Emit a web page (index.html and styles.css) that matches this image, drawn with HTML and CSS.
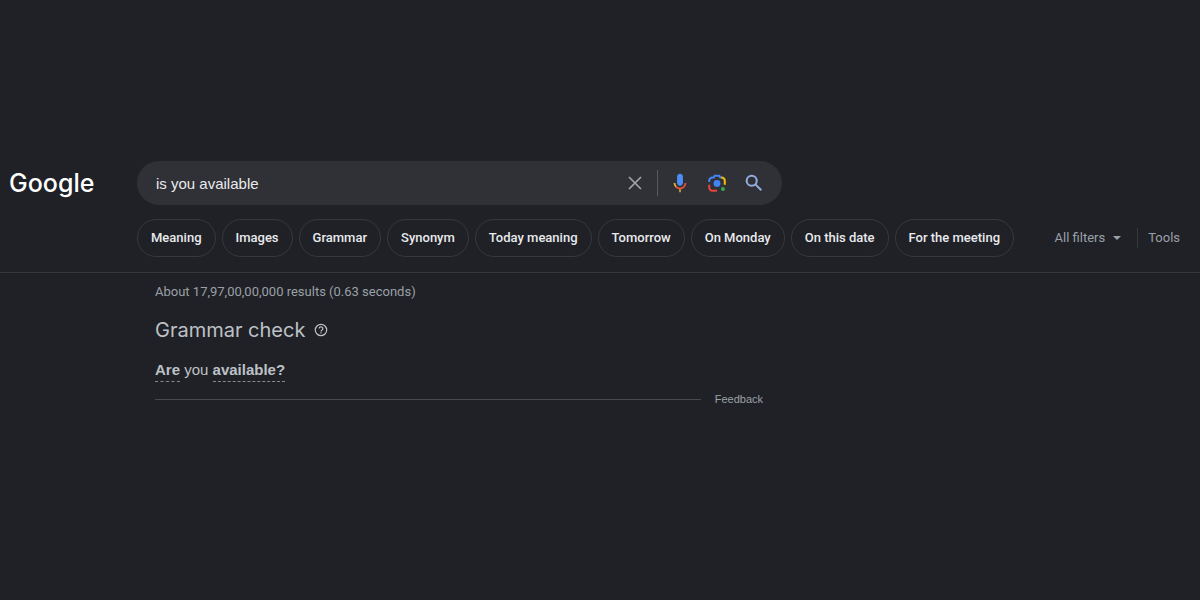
FILE: index.html
```html
<!DOCTYPE html>
<html lang="en">

<head>
    <meta charset="UTF-8">
    <meta name="viewport" content="width=device-width, initial-scale=1.0">
    <title>is you available - Google Search</title>
    <link rel="stylesheet" href="styles.css">
</head>

<body>

    <!-- Header Section -->
    <header class="header">
        <div class="search-row">
            <a href="#" class="logo">Google</a>
            <form class="search-box" role="search">
                <input type="text" class="search-input" value="is you available" aria-label="Search">
                <button type="reset" class="icon-button" aria-label="Clear">
                    <svg width="20" height="20" viewBox="0 0 20 20" fill="none" stroke="#a3a6aa" stroke-width="1.6">
                        <path d="M4 4l12 12M16 4L4 16" />
                    </svg>
                </button>
                <span class="divider"></span>
                <button type="button" class="icon-button" aria-label="Search by voice">
                    <svg width="22" height="22" viewBox="0 0 24 24">
                        <path fill="#4c8df6" d="M12 15c1.7 0 3.2-1.4 3.2-3.2V5.2C15.2 3.400 13.700 2 12 2S8.800 3.400 8.800 5.200v6.600C8.800 13.600 10.300 15 12 15z" />
                        <path fill="#b9a03c" d="M11 18.500h2V22h-2z" />
                        <path fill="#e0503f" d="M12 17a5 5 0 0 1-3.600-1.500l-1.400 1.400A7 7 0 0 0 12 19a7 7 0 0 0 7-7h-2a5 5 0 0 1-5 5z" />
                        <path fill="#f2b32c" d="M7.100 16.900A7 7 0 0 1 5 12h2c0 1.400.500 2.600 1.500 3.500z" />
                    </svg>
                </button>
                <button type="button" class="icon-button" aria-label="Search by image">
                    <svg width="22" height="22" viewBox="0 0 24 24" fill="none" stroke-width="2.2">
                        <path stroke="#4285f4" d="M3.500 11V9.500a3.500 3.500 0 0 1 3.500-3.500h1.500l1-2h5l1 2H17" />
                        <path stroke="#fbbc04" d="M16.500 6H17a3.500 3.500 0 0 1 3.500 3.500V14" />
                        <path stroke="#ea4335" d="M3.500 14v3A3.500 3.500 0 0 0 7 20.500h5" />
                        <circle cx="12" cy="12.500" r="3.700" fill="#4285f4" />
                        <circle cx="18.500" cy="18.500" r="2.200" fill="#34a853" />
                    </svg>
                </button>
                <button type="submit" class="icon-button" aria-label="Google Search">
                    <svg width="22" height="22" viewBox="0 0 24 24" fill="none" stroke="#93addf" stroke-width="2.2">
                        <circle cx="9.500" cy="9.500" r="5.500" />
                        <path d="M13.500 13.500l6.500 6.500" />
                    </svg>
                </button>
            </form>
        </div>

        <!-- Filters -->
        <nav class="filters">
            <a href="#" class="chip">Meaning</a>
            <a href="#" class="chip">Images</a>
            <a href="#" class="chip">Grammar</a>
            <a href="#" class="chip">Synonym</a>
            <a href="#" class="chip">Today meaning</a>
            <a href="#" class="chip">Tomorrow</a>
            <a href="#" class="chip">On Monday</a>
            <a href="#" class="chip">On this date</a>
            <a href="#" class="chip">For the meeting</a>
            <div class="tools">
                <button type="button" class="tool-button">All filters <span class="caret"></span></button>
                <button type="button" class="tool-button tool-last">Tools</button>
            </div>
        </nav>
    </header>

    <!-- Results Section -->
    <main class="results">
        <p class="stats">About 17,97,00,00,000 results (0.63 seconds)</p>
        <div class="title-row">
            <h1>Grammar check</h1>
            <button type="button" class="icon-button" aria-label="About grammar check">
                <svg width="14" height="14" viewBox="0 0 14 14" fill="none" stroke="#bdc1c6" stroke-width="1.2">
                    <circle cx="7" cy="7" r="5.700" />
                    <path d="M5.200 5.600a1.800 1.800 0 1 1 2.800 1.500c-.700.500-1 .700-1 1.300M7 9.300v1.300" />
                </svg>
            </button>
        </div>
        <p class="correction"><b>Are</b> you <b>available?</b></p>
        <div class="feedback">
            <a href="#">Feedback</a>
        </div>
    </main>

</body>

</html>
```
FILE: styles.css
```css
/* General Reset */
* {
    box-sizing: border-box;
}

body {
    margin: 0;
    font-family: "Liberation Sans", Arial, sans-serif;
    background: #202126;
    color: #bdc1c6;
}

a {
    color: inherit;
    text-decoration: none;
}

button {
    padding: 0;
    border: none;
    background: none;
    color: inherit;
    font: inherit;
    cursor: pointer;
}

/* Header Section */
.header {
    padding: 161px 20px 15px 9px;
    border-bottom: 1px solid #35363b;
}

.search-row {
    display: flex;
    align-items: center;
}

.logo {
    width: 128px;
    color: #fff;
    font-family: Inter, sans-serif;
    font-size: 25px;
    font-weight: 500;
    line-height: 42px;
}

.search-box {
    display: flex;
    align-items: center;
    flex: 1;
    max-width: 645px;
    height: 44px;
    padding: 0 17px 0 19px;
    border-radius: 22px;
    background: #303136;
}

.search-input {
    flex: 1;
    min-width: 0;
    padding: 0;
    border: none;
    outline: none;
    background: none;
    color: #e8eaed;
    font: 15px "Liberation Sans", Arial, sans-serif;
}

.icon-button {
    display: flex;
}

.search-box .icon-button + .icon-button {
    margin-left: 15px;
}

.divider {
    width: 1px;
    height: 26px;
    margin: 0 11px 0 12px;
    background: #56585d;
}

/* Filters */
.filters {
    display: flex;
    align-items: center;
    gap: 6px;
    margin: 14px 0 0 128px;
    font-family: Roboto, sans-serif;
    font-size: 13px;
    white-space: nowrap;
}

.chip {
    padding: 0 13px;
    border: 1px solid #37383d;
    border-radius: 19px;
    color: #e8eaed;
    font-weight: 500;
    line-height: 36px;
}

.tools {
    display: flex;
    align-items: center;
    margin-left: auto;
    color: #9aa0a6;
}

.tool-button {
    display: flex;
    align-items: center;
    line-height: 20px;
}

.caret {
    margin-left: 8px;
    border: 4px solid transparent;
    border-top-color: #9aa0a6;
    border-bottom: none;
}

.tool-last {
    margin-left: 16px;
    padding-left: 10px;
    border-left: 1px solid #37383d;
}

/* Results Section */
.results {
    max-width: 763px;
    padding-left: 155px;
}

.stats {
    margin: 9px 0 0;
    color: #9aa0a6;
    font-family: Roboto, sans-serif;
    font-size: 13px;
    line-height: 20px;
}

.title-row {
    display: flex;
    align-items: center;
    gap: 9px;
    margin-top: 14px;
}

.title-row h1 {
    margin: 0;
    font-family: Inter, sans-serif;
    font-size: 20px;
    font-weight: 400;
    line-height: 28px;
}

.correction {
    margin: 16px 0 0;
    font-size: 15px;
    line-height: 20px;
}

.correction b {
    display: inline-block;
    padding-bottom: 1px;
    border-bottom: 1px dashed #85888d;
}

.feedback {
    display: flex;
    align-items: center;
    gap: 14px;
    margin-top: 9px;
    color: #9aa0a6;
    font-size: 11px;
    line-height: 16px;
}

.feedback::before {
    content: "";
    flex: 1;
    height: 1px;
    background: #46484c;
}
```
